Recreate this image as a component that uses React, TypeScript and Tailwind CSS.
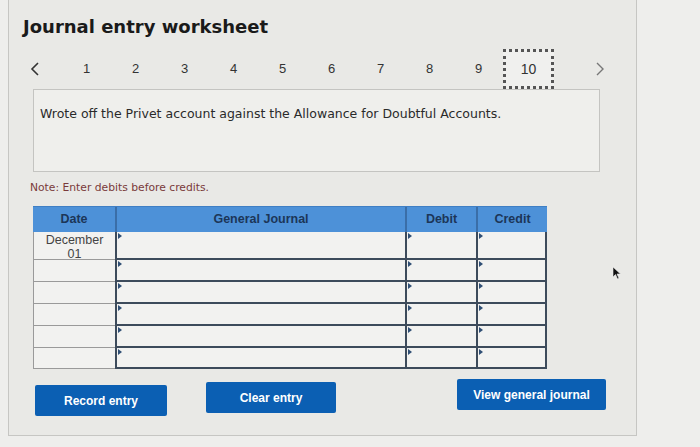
import React from "react";

const rowHeights = [28, 22, 22, 22, 22, 21];

function Tri() {
  return (
    <span className="absolute left-[1px] top-[1px] w-0 h-0 border-t-[3px] border-b-[3px] border-l-[4px] border-t-transparent border-b-transparent border-l-[#2f4e74]" />
  );
}

export default function App() {
  const nums = ["1", "2", "3", "4", "5", "6", "7", "8", "9"];
  return (
    <div className="relative w-[700px] h-[447px] bg-[#eeeeec] overflow-hidden" style={{ fontFamily: '"DejaVu Sans", Verdana, sans-serif' }}>
      <div className="ml-[8px] w-[629px] h-[436px] border-l border-r border-b border-[#c6c6c3] bg-[#e9e9e6] flex flex-col">
        {/* Title */}
        <div className="pt-[15px] pl-[14px] text-[18px] leading-[24px] font-bold text-[#1a1a1a]">Journal entry worksheet</div>

        {/* Nav */}
        <div className="mt-[10px] h-[40px] flex items-center ml-[14px] text-[13px] text-[#333]" style={{ fontFamily: '"Liberation Sans", Arial, sans-serif' }}>
          <div className="w-[24px] flex justify-center">
            <svg width="10" height="16" viewBox="0 0 10 16"><path d="M8 2 L2 8 L8 14" fill="none" stroke="#333" strokeWidth="1.6" /></svg>
          </div>
          <div className="ml-[15px] flex items-center">
            {nums.map((n) => (
              <div key={n} className="w-[49px] text-center">{n}</div>
            ))}
            <div className="w-[51px] h-[40px] flex items-center justify-center border-[3px] border-dotted border-[#555] bg-[#f0f0ee] text-[14px]">10</div>
          </div>
          <div className="ml-[34px] w-[24px] flex justify-center">
            <svg width="10" height="16" viewBox="0 0 10 16"><path d="M2 2 L8 8 L2 14" fill="none" stroke="#777" strokeWidth="1.4" /></svg>
          </div>
        </div>

        {/* Description */}
        <div className="ml-[24px] w-[567px] h-[83px] border border-[#c4c4c1] bg-[#efefec] pl-[6px] pt-[16px] text-[12.5px] leading-[16px] text-[#2a2a2a]">
          Wrote off the Privet account against the Allowance for Doubtful Accounts.
        </div>

        {/* Note */}
        <div className="mt-[9px] ml-[21px] text-[10.75px] leading-[14px] text-[#7a3a3a]">Note: Enter debits before credits.</div>

        {/* Table */}
        <div className="mt-[11px] ml-[24px] w-[514px]" style={{ fontFamily: '"Liberation Sans", Arial, sans-serif' }}>
          <div className="flex h-[26px] bg-[#4d91d8] text-[12.5px] font-bold text-[#1c3658] border-t border-[#3f7fc4]">
            <div className="w-[82px] flex items-center justify-center">Date</div>
            <div className="w-[290px] flex items-center justify-center border-l-2 border-[#3a6ea8]">General Journal</div>
            <div className="w-[71px] flex items-center justify-center border-l-2 border-[#3a6ea8]">Debit</div>
            <div className="w-[71px] flex items-center justify-center border-l-2 border-[#3a6ea8]">Credit</div>
          </div>
          <div className="flex flex-col bg-[#f2f2f0]">
            {rowHeights.map((h, i) => (
              <div key={i} className="flex" style={{ height: h }}>
                <div className="w-[82px] border-l border-b border-[#9a9a9a] flex flex-col items-center justify-start text-[12.5px] leading-[14px] text-[#444] pt-[1px]">
                  {i === 0 ? (
                    <>
                      <span>December</span>
                      <span>01</span>
                    </>
                  ) : null}
                </div>
                <div className="relative w-[290px] border-l-2 border-b-2 border-[#3d4b5b]"><Tri /></div>
                <div className="relative w-[71px] border-l-2 border-b-2 border-[#3d4b5b]"><Tri /></div>
                <div className="relative w-[71px] border-l-2 border-r-2 border-b-2 border-[#3d4b5b]"><Tri /></div>
              </div>
            ))}
          </div>
        </div>

        {/* Buttons */}
        <div className="mt-[13px] ml-[26px] flex items-start text-[12px] font-bold text-white" style={{ fontFamily: '"Liberation Sans", Arial, sans-serif' }}>
          <button className="w-[132px] h-[31px] mt-[3px] bg-[#0b5fb3] rounded-[2px] flex items-center justify-center">Record entry</button>
          <button className="ml-[39px] w-[130px] h-[31px] bg-[#0b5fb3] rounded-[2px] flex items-center justify-center">Clear entry</button>
          <button className="ml-[121px] w-[149px] h-[31px] -mt-[3px] bg-[#0b5fb3] rounded-[2px] flex items-center justify-center">View general journal</button>
        </div>
      </div>

      {/* Cursor */}
      <svg className="absolute left-[612px] top-[266px]" width="10" height="15" viewBox="0 0 10 15">
        <path d="M1 1 L1 11 L3.5 8.5 L5.5 13 L7 12.3 L5 8 L8.5 8 Z" fill="#111" stroke="#eee" strokeWidth="0.6" />
      </svg>
    </div>
  );
}
